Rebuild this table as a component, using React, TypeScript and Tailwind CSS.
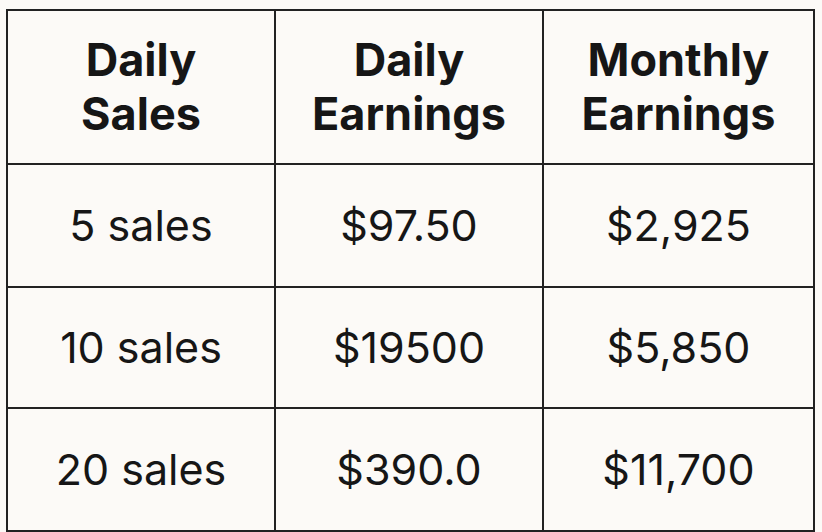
const headers = [
  ['Daily', 'Sales'],
  ['Daily', 'Earnings'],
  ['Monthly', 'Earnings'],
];

const rows = [
  ['5 sales', '$97.50', '$2,925'],
  ['10 sales', '$19500', '$5,850'],
  ['20 sales', '$390.0', '$11,700'],
];

export default function App() {
  return (
    <div className="w-[822px] h-[532px] bg-[#fcfaf7] pt-[9px] pl-[6px] font-['Inter',sans-serif] text-[#161616]">
      <div className="w-[809px] border-2 border-[#222] grid grid-cols-[268px_268px_269px]">
        {headers.map((h, i) => (
          <div
            key={i}
            className={`h-[154px] flex flex-col items-center justify-center font-bold text-[45px] leading-[54px] border-b-2 border-[#222] ${i < 2 ? 'border-r-2' : ''}`}
          >
            <span>{h[0]}</span>
            <span>{h[1]}</span>
          </div>
        ))}
        {rows.map((r, ri) =>
          r.map((c, ci) => (
            <div
              key={`${ri}-${ci}`}
              className={`${ri === 0 ? 'h-[123px]' : 'h-[121px]'} flex items-center justify-center text-[43px] ${ri < 2 ? 'border-b-2' : ''} ${ci < 2 ? 'border-r-2' : ''} border-[#222]`}
            >
              {c}
            </div>
          ))
        )}
      </div>
    </div>
  );
}
